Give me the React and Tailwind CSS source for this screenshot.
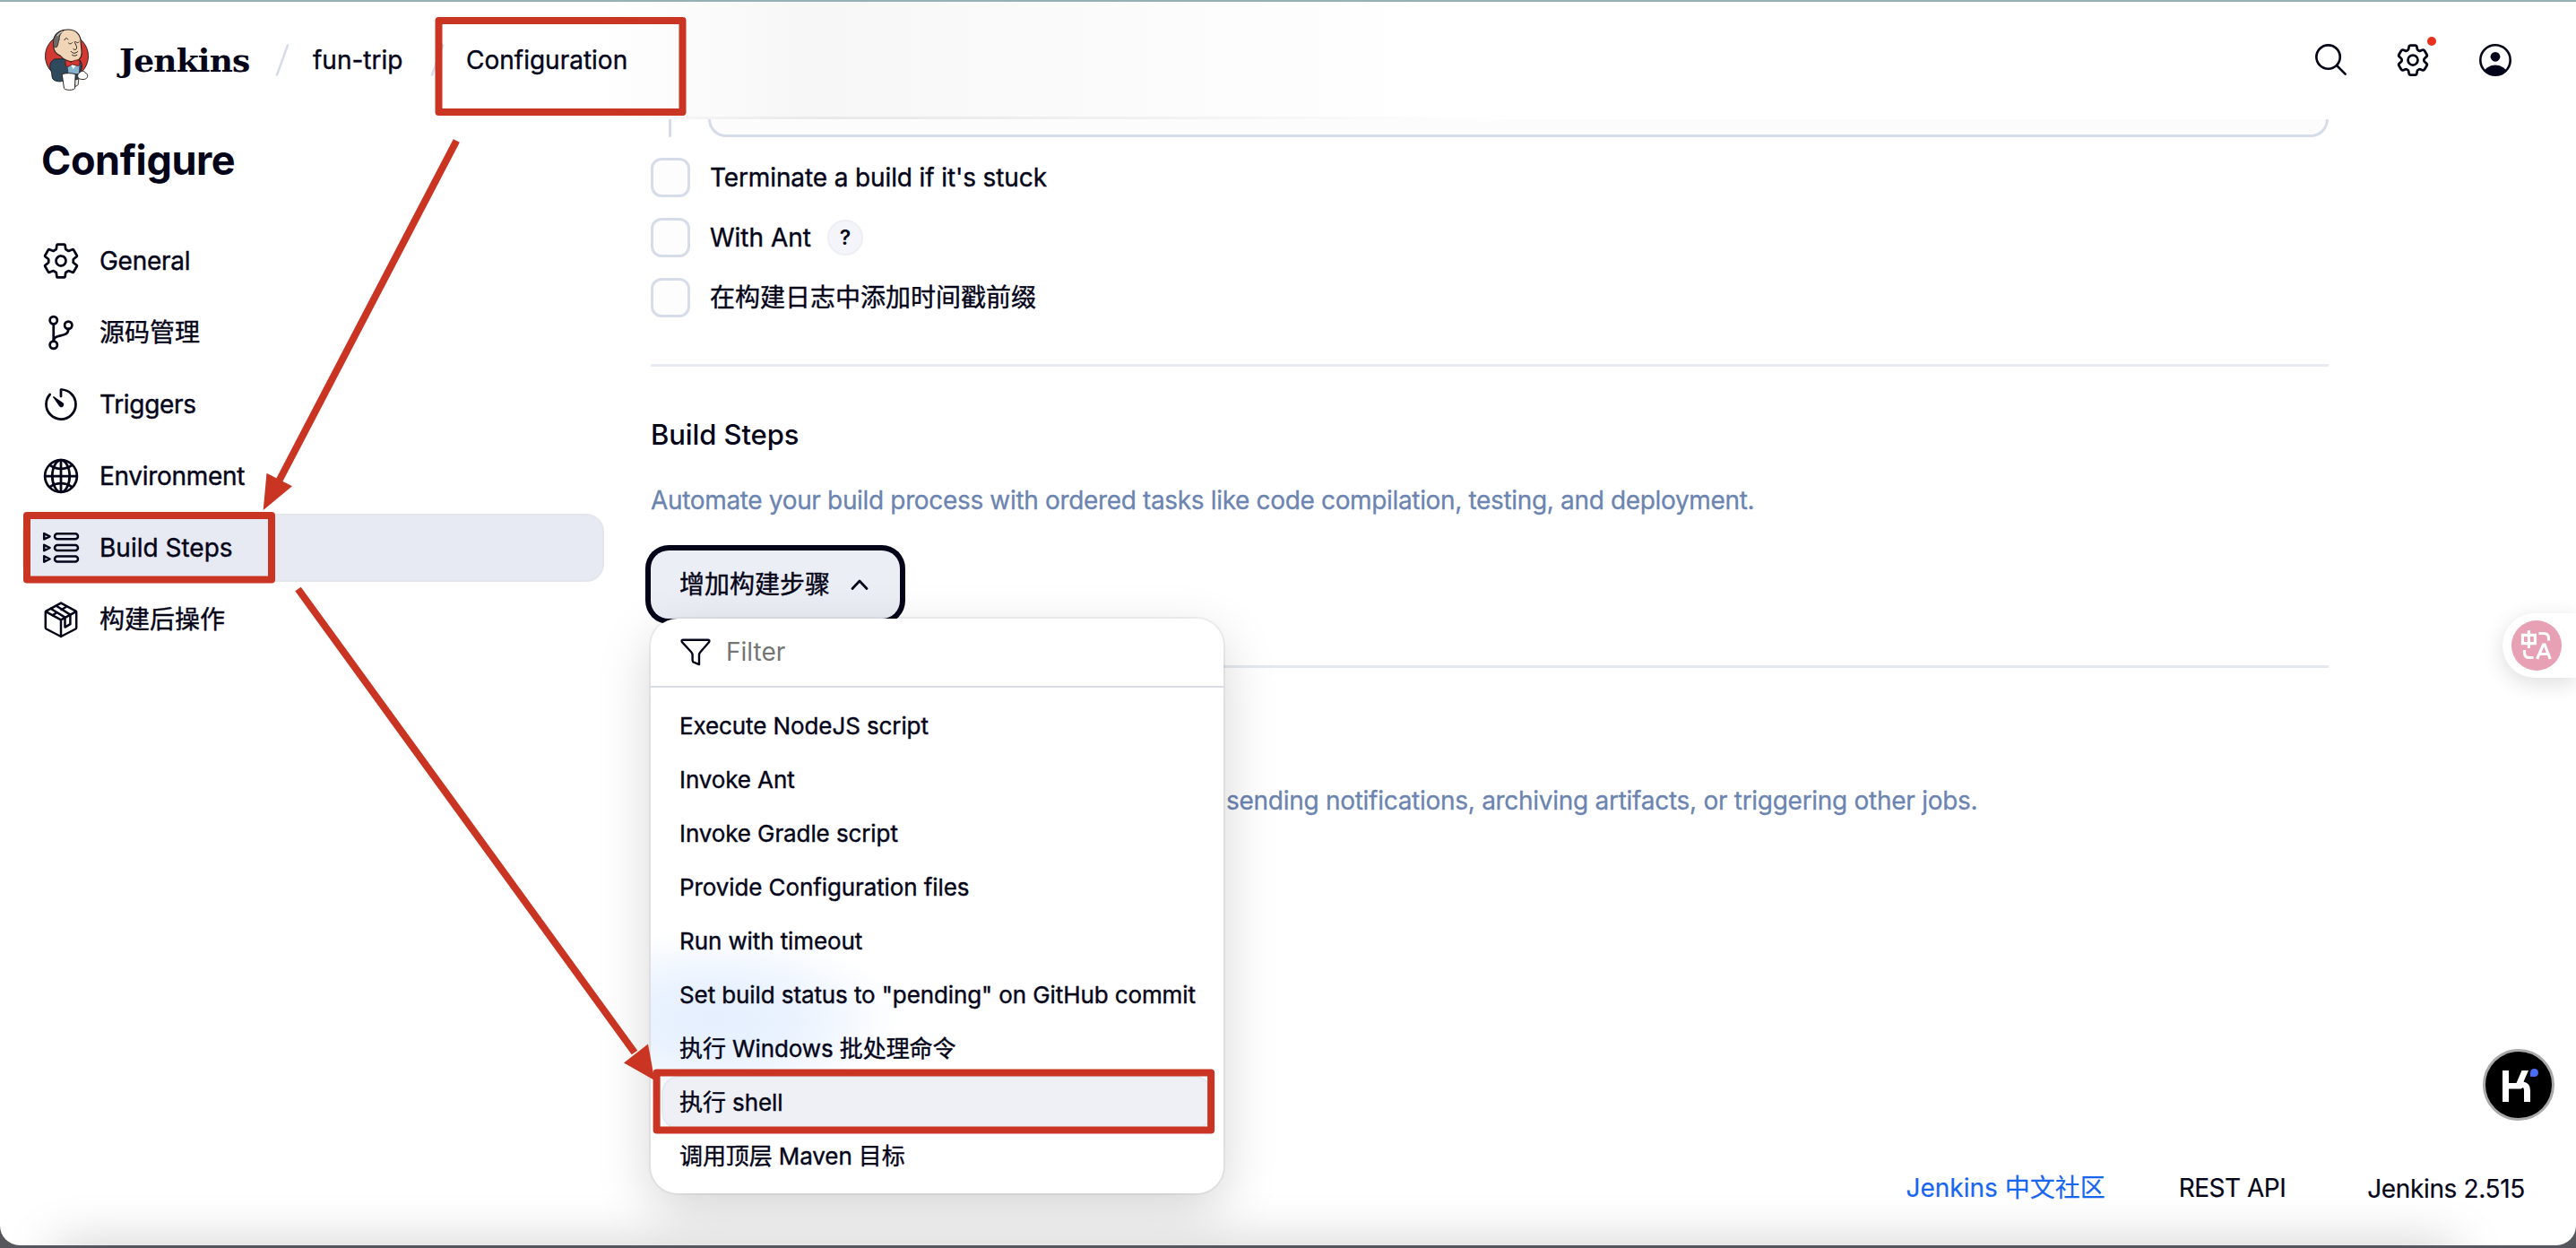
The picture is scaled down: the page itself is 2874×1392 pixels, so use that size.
import {
  IoSettingsOutline,
  IoGitBranchOutline,
  IoTimerOutline,
  IoGlobeOutline,
  IoSearchOutline,
} from "react-icons/io5";
import { HiOutlineCog6Tooth } from "react-icons/hi2";

function JenkinsLogo() {
  return (
    <svg viewBox="60 36 152 210" className="h-[70px] w-[51px]">
      <ellipse cx="136" cy="128" rx="72" ry="73" fill="#d33833" stroke="#33261f" strokeWidth="3" />
      <path
        d="M94 138 C76 150 78 166 84 178 C88 190 84 200 92 207 C102 214 118 214 124 210 L170 214 L180 186 L186 168 C188 152 182 140 172 136 Z"
        fill="#2f4a5c"
        stroke="#1b252c"
        strokeWidth="3"
      />
      <path d="M138 150 L178 150 L176 186 L142 186 Z" fill="#86b4d0" />
      <path d="M150 158 L168 156 L158 172 Z" fill="#f4f4f4" />
      <path
        d="M92 84 C90 60 104 42 138 39 C170 38 184 60 183 84 L185 104 C188 122 184 138 168 144 C150 150 126 142 114 126 C104 122 92 112 92 96 Z"
        fill="#f0d6b7"
        stroke="#2b211b"
        strokeWidth="3.5"
      />
      <path
        d="M91 86 C90 62 104 46 128 40 C116 50 110 60 111 72 C106 82 108 92 102 98 C94 100 91 94 91 86 Z"
        fill="#6d6b6d"
        stroke="#2b211b"
        strokeWidth="2.5"
      />
      <path d="M104 60 C110 52 116 48 122 45" fill="none" stroke="#c9c9c9" strokeWidth="4" />
      <path
        d="M128 74 C132 66 138 66 140 72 M142 84 C146 88 150 88 154 83 M166 80 C170 84 174 84 177 80 M162 80 C166 92 172 96 168 104 C164 108 160 106 158 104 M150 112 C156 120 166 120 173 112 M154 124 C160 128 166 127 170 124"
        fill="none"
        stroke="#2b211b"
        strokeWidth="3"
        strokeLinecap="round"
      />
      <path
        d="M131 145 C134 140 142 144 150 148 C158 142 176 138 179 143 C180 150 179 158 176 160 C168 160 160 156 154 155 C148 160 138 165 133 162 Z"
        fill="#d33833"
        stroke="#5c1512"
        strokeWidth="2.5"
      />
      <path
        d="M178 184 C184 176 196 176 198 184 C206 186 208 196 202 202 C194 208 182 206 176 202 C170 196 172 188 178 184 Z"
        fill="#fff"
        stroke="#2b211b"
        strokeWidth="3"
      />
      <path d="M162 208 L176 204 L174 224 L164 230 Z" fill="#e8eef2" stroke="#2b211b" strokeWidth="2.5" />
      <path
        d="M120 188 C132 184 152 184 165 188 L163 236 C156 243 134 243 127 236 Z"
        fill="#fff"
        stroke="#2b211b"
        strokeWidth="3"
      />
    </svg>
  );
}

function UserIcon() {
  return (
    <svg viewBox="0 0 36 36" className="size-9">
      <clipPath id="user-clip">
        <circle cx="18" cy="18" r="17" />
      </clipPath>
      <circle cx="18" cy="14.3" r="5.4" fill="#05051a" />
      <ellipse cx="18" cy="33.5" rx="13" ry="10" fill="#05051a" clipPath="url(#user-clip)" />
      <circle cx="18" cy="18" r="16.7" fill="none" stroke="#05051a" strokeWidth="2.6" />
    </svg>
  );
}

function StepsIcon() {
  return (
    <svg viewBox="0 0 44 44" className="size-11" fill="none" stroke="#05051a" strokeWidth="2.5" strokeLinejoin="round">
      {[9.3, 22, 34.5].map((y) => (
        <g key={y}>
          <rect x="15" y={y - 3} width="26" height="6" rx="3" />
          <path d={`M3.2 ${y - 3.2} L9.6 ${y} L3.2 ${y + 3.2} Z`} />
        </g>
      ))}
    </svg>
  );
}

function PackageIcon() {
  return (
    <svg
      viewBox="0 0 44 44"
      className="size-11"
      fill="none"
      stroke="#05051a"
      strokeWidth="2.5"
      strokeLinejoin="round"
      strokeLinecap="round"
    >
      <path d="M22 3.6 L38.6 12.6 Q39.2 13 39.2 14 V31 Q39.2 32 38.4 32.5 L22 41 L5.6 32.5 Q4.8 32 4.8 31 V14 Q4.8 13 5.4 12.6 Z" />
      <path d="M5 13.2 L22 22.4 L39 13.2 M22 22.4 V41" />
      <path d="M10.5 9.8 L26.5 19.6 V30.6 L32.4 27.2 V16.6 L16.8 6.8" />
      <path d="M12.6 17.2 L17.4 14.2 M22.6 11 L27.6 8" />
    </svg>
  );
}

function FilterIcon() {
  return (
    <svg viewBox="0 0 34 31" className="h-[31px] w-[34px]" fill="none" stroke="#05051a" strokeWidth="2.4" strokeLinejoin="round">
      <path d="M3.2 1.8 H30.8 Q33.2 1.8 32 4.2 L22.4 15.2 Q21 16.8 21 18.6 V29 Q18.6 28.6 15.4 26.8 Q13.6 26.2 13.6 24.6 V18.6 Q13.6 16.8 12.2 15.2 L2 4.2 Q0.8 1.8 3.2 1.8 Z" />
    </svg>
  );
}

function ChevronUp() {
  return (
    <svg viewBox="0 0 20 12" className="h-3 w-5" fill="none" stroke="#05051a" strokeWidth="2.7" strokeLinecap="round" strokeLinejoin="round">
      <path d="M2 10.5 L10 2 L18 10.5" />
    </svg>
  );
}

const navItems = [
  { label: "General", icon: <IoSettingsOutline className="size-11" />, spacing: "tracking-[-0.28px]" },
  { label: "源码管理", icon: <IoGitBranchOutline className="size-[44px]" />, spacing: "tracking-normal" },
  { label: "Triggers", icon: <IoTimerOutline className="size-11" />, spacing: "tracking-[-0.3px]" },
  { label: "Environment", icon: <IoGlobeOutline className="size-11" />, spacing: "tracking-[-0.3px]" },
  { label: "Build Steps", icon: <StepsIcon />, spacing: "tracking-normal", active: true },
  { label: "构建后操作", icon: <PackageIcon />, spacing: "tracking-normal" },
];

const options = [
  { label: "Terminate a build if it's stuck", spacing: "tracking-[-0.12px]" },
  { label: "With Ant", spacing: "tracking-normal", help: true },
  { label: "在构建日志中添加时间戳前缀", spacing: "tracking-normal" },
];

const steps = [
  "Execute NodeJS script",
  "Invoke Ant",
  "Invoke Gradle script",
  "Provide Configuration files",
  "Run with timeout",
  'Set build status to "pending" on GitHub commit',
  "执行 Windows 批处理命令",
  "执行 shell",
  "调用顶层 Maven 目标",
];

function Slash() {
  return (
    <svg viewBox="0 0 16 36" className="h-9 w-4">
      <path d="M2 34.5 L14 1.5" stroke="#d6dce9" strokeWidth="2.6" strokeLinecap="round" />
    </svg>
  );
}

function Header() {
  return (
    <header className="relative flex h-[133px] shrink-0 items-center border-t-2 border-[#94b1b5] pr-[72px] pb-[2px] pl-[49px]">
      <div className="absolute top-0 left-[660px] h-full w-[940px] bg-linear-to-r from-transparent via-[#f7f7f7] via-25% to-transparent" />
      <div className="absolute bottom-0 left-[680px] h-[3px] w-[1000px] bg-linear-to-r from-transparent via-[#e9e9eb] via-25% to-transparent" />
      <div className="relative flex w-full items-center">
        <JenkinsLogo />
        <span className="ml-[33px] w-[174px] font-['DejaVu_Serif',serif] text-[36px] leading-[40px] font-bold tracking-[-0.8px]">
          Jenkins
        </span>
        <Slash />
        <span className="ml-[26px] w-[131px] [-webkit-text-stroke:0.4px]">fun-trip</span>
        <Slash />
        <span className="ml-[24px] [-webkit-text-stroke:0.4px]">Configuration</span>
        <div className="ml-auto flex items-center">
          <IoSearchOutline className="mr-[48px] size-[43px]" />
          <div className="relative mr-[52px]">
            <HiOutlineCog6Tooth className="size-11" />
            <span className="absolute -top-[4px] right-[-4px] size-[10px] rounded-full bg-[#e8301f]" />
          </div>
          <UserIcon />
        </div>
      </div>
    </header>
  );
}

function Sidebar() {
  return (
    <aside className="w-[726px] shrink-0 pt-[16px] pl-[25px]">
      <h1 className="pl-[21px] text-[45px] leading-[60px] font-bold tracking-[-0.4px]">Configure</h1>
      <nav className="mt-[44px] flex w-[649px] flex-col gap-1">
        {navItems.map((item) => (
          <div
            key={item.label}
            className={
              item.active
                ? "flex h-[76px] items-center gap-[21px] rounded-[20px] border-2 border-[#e3e7ed] bg-[#e7eaf3] pl-[19px]"
                : "flex h-[76px] items-center gap-[21px] pl-[21px]"
            }
          >
            {item.icon}
            <span className={"leading-[36px] [-webkit-text-stroke:0.4px] " + item.spacing}>{item.label}</span>
          </div>
        ))}
      </nav>
    </aside>
  );
}

function StepMenu() {
  return (
    <div className="absolute top-[76px] left-0 z-10 w-[639px] rounded-[30px] bg-white shadow-[0_0_0_2px_rgba(0,0,0,0.05),0_20px_60px_rgba(0,0,0,0.17)]">
      <div className="rounded-[30px] bg-[radial-gradient(ellipse_210px_100px_at_70px_448px,#e5effe_0%,#e9f2fe_40%,rgba(255,255,255,0)_100%)]">
        <div className="flex h-[77px] items-center border-b-2 border-[#d6dce9] pl-[33px]">
          <FilterIcon />
          <span className="ml-[17px] pb-px text-[28px] leading-[36px] text-[#757575]">Filter</span>
        </div>
        <ul className="px-3 pt-[13px] pb-[11px] text-[26px] tracking-[-0.1px] whitespace-nowrap [-webkit-text-stroke:0.4px]">
          {steps.map((s) => (
            <li
              key={s}
              className={
                s === "执行 shell"
                  ? "flex h-[60px] items-center rounded-[20px] border-2 border-[#e4e8f0] bg-[#eef0f5] pl-[18px]"
                  : "flex h-[60px] items-center pl-5"
              }
            >
              {s}
            </li>
          ))}
        </ul>
      </div>
    </div>
  );
}

function Main() {
  return (
    <main className="w-[1872px] shrink-0">
      <div className="flex h-5">
        <div className="ml-[20px] w-[3px] rounded-b bg-[#d6dce9]" />
        <div className="ml-[41px] flex-1 rounded-b-[20px] border-3 border-t-0 border-[#d6dce9] bg-[#fcfcfc]" />
      </div>
      <div className="mt-[23px] flex flex-col gap-[23px]">
        {options.map((o) => (
          <label key={o.label} className="flex h-11 items-center">
            <span className="size-11 rounded-[12px] border-3 border-[#d6dce9] bg-[#fdfdfd]" />
            <span className={"ml-[22px] leading-[36px] [-webkit-text-stroke:0.4px] " + o.spacing}>{o.label}</span>
            {o.help && (
              <span className="ml-[18px] flex size-10 items-center justify-center rounded-full border-2 border-[#eeeff4] bg-[#f4f5fa] text-[23px] font-semibold">
                ?
              </span>
            )}
          </label>
        ))}
      </div>
      <hr className="mt-[52px] h-[3px] border-0 bg-[#e7ebf1]" />
      <h2 className="mt-[56px] text-[31px] leading-[40px] font-medium tracking-[-0.1px]">Build Steps</h2>
      <p className="mt-[33px] leading-[40px] tracking-[-0.34px] text-[#6b84b0] [-webkit-text-stroke:0.3px]">
        Automate your build process with ordered tasks like code compilation, testing, and deployment.
      </p>
      <div className="relative mt-[36px] h-[76px]">
        <button className="flex h-[76px] w-[278px] items-center rounded-[20px] bg-[#ebeef4] pl-[32px] ring-[6px] ring-[#05051a]">
          <span className="mr-[23px] leading-[36px] [-webkit-text-stroke:0.4px]">增加构建步骤</span>
          <ChevronUp />
        </button>
        <StepMenu />
      </div>
      <hr className="mt-[52px] h-[3px] border-0 bg-[#e4e8ef]" />
      <p className="mt-[128px] ml-[642px] leading-[40px] tracking-[-0.28px] text-[#6b84b0] [-webkit-text-stroke:0.3px]">
        sending notifications, archiving artifacts, or triggering other jobs.
      </p>
    </main>
  );
}

function Footer() {
  return (
    <footer className="mt-auto flex h-[129px] items-center justify-end pr-[57px] [-webkit-text-stroke:0.2px]">
      <span className="mr-[82px]  text-[#1866f0]">Jenkins 中文社区</span>
      <span className="mr-[91px] tracking-[-0.5px]">REST API</span>
      <span className="pt-[2px] tracking-[-0.35px]">Jenkins 2.515</span>
    </footer>
  );
}

function TranslateTab() {
  return (
    <div className="absolute top-[684px] right-0 z-20 flex h-[72px] w-[82px] items-center rounded-l-full bg-white pl-[10px] shadow-[0_6px_24px_rgba(0,0,0,0.14)]">
      <svg viewBox="0 0 56 56" className="size-14">
        <circle cx="28" cy="28" r="28" fill="#e8a0b4" />
        <g fill="none" stroke="#fff" strokeWidth="3.2">
          <path d="M12.4 16.4 H26.4 V25.6 H12.4 Z M19.4 11 V31" />
          <path d="M30.5 14.5 H36 Q41.5 14.5 41.5 20 V22.5" />
          <path d="M14.5 33 V36 Q14.5 41.5 20 41.5 H24.5" />
          <path d="M28.6 43 L35.5 27 H37 L43.2 43 M31.5 37.5 H41" />
        </g>
      </svg>
    </div>
  );
}

function AssistantBadge() {
  return (
    <div className="absolute top-[1170px] right-6 z-20">
      <svg viewBox="0 0 80 80" className="size-20">
        <circle cx="40" cy="40" r="38.5" fill="#000" stroke="#a9a9a9" strokeWidth="3" />
        <path
          d="M22 24 H29 V38 H37.5 L43.5 24 H51 L45.5 36.5 Q53 38 53 46 V59 H46 V46 Q46 44.5 45 43 L42.5 44.5 H29 V59 H22 Z"
          fill="#fff"
        />
        <path d="M53 30.8 V26.5 A4.5 4.5 0 1 1 57.5 31 Z" fill="#4a6cf7" />
      </svg>
    </div>
  );
}

function Annotations() {
  return (
    <svg viewBox="0 0 2874 1392" className="pointer-events-none absolute top-0 left-0 z-30 h-[1392px] w-[2874px]">
      <g fill="none" stroke="#c93522" strokeWidth="8" strokeLinejoin="round">
        <rect x="489.5" y="23" width="272" height="102" />
        <rect x="30" y="575" width="273" height="71.5" />
        <rect x="732.6" y="1196.4" width="618.5" height="64" />
        <path d="M509.3 157 L311.5 536" />
        <path d="M332.5 657 L708 1174" />
      </g>
      <g fill="#c93522">
        <path d="M293.7 569 L297.5 527.7 L326 542.3 Z" />
        <path d="M730.4 1205 L723 1164.5 L696 1185.5 Z" />
      </g>
    </svg>
  );
}

export default function App() {
  return (
    <div className="relative h-[1392px] w-[2874px] overflow-hidden bg-[#55575c] font-['Inter','Noto_Sans_CJK_SC',sans-serif] text-[28px] leading-[36px] text-[#05051a]">
      <div className="relative flex h-[1389px] flex-col overflow-hidden rounded-b-[22px] bg-white">
        <Header />
        <div className="relative z-10 flex">
          <Sidebar />
          <Main />
        </div>
        <div className="absolute top-full left-[60px] h-10 w-[2680px] shadow-[0_0_56px_rgba(0,0,0,0.21)]" />
        <Footer />
      </div>
      <TranslateTab />
      <AssistantBadge />
      <Annotations />
    </div>
  );
}
